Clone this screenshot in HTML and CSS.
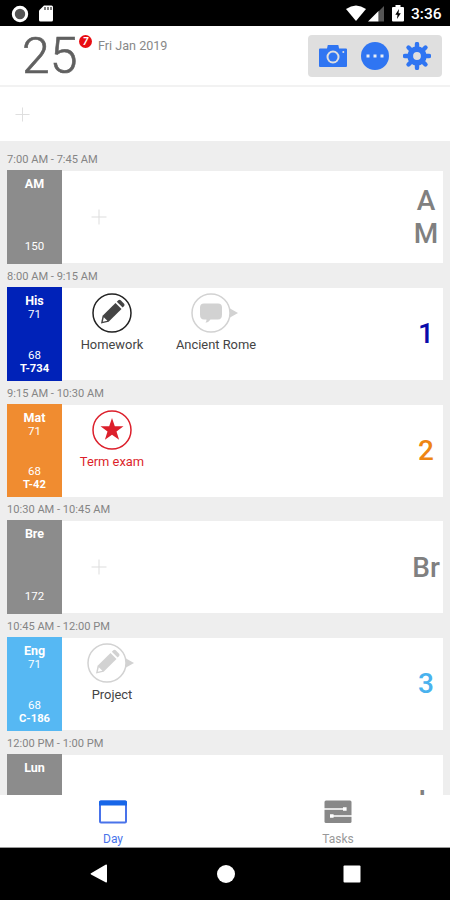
FILE: index.html
```html
<!doctype html>
<html lang="en">
    <head>
        <meta charset="UTF-8" />
        <meta name="viewport" content="width=device-width, initial-scale=1.0" />
        <title>Day schedule</title>
        <link rel="stylesheet" href="styles.css">
    </head>
    <body>
        <svg class="defs">
            <symbol id="pencil" viewBox="0 0 40 40">
                <path fill="currentColor" d="M9.500 30.500l1.600-7.700L24 9.900l6 6-12.900 12.900z" />
                <path fill="currentColor" d="M25.300 8.700l1.500-1.400q1.200-1 2.400 0l3.400 3.400q1.100 1.200 0 2.400L31.200 14.600z" />
                <path fill="#fff" d="M11.300 28.700l1-4.400 3.600 3.400z" />
            </symbol>
            <symbol id="plus" viewBox="0 0 16 16">
                <path stroke="currentColor" d="M8 .5v15M.5 8h15" />
            </symbol>
        </svg>

        <div class="status-bar">
            <svg width="18" height="18" viewBox="0 0 18 18">
                <circle cx="9" cy="9" r="6.700" fill="#555" stroke="#fff" stroke-width="3" />
            </svg>
            <svg class="sd-card" width="14" height="17" viewBox="0 0 14 17">
                <path fill="#fff" d="M5 .5h7.500q1.500 0 1.500 1.500v13q0 1.500-1.500 1.500h-11Q0 16.500 0 15V5.500z" />
                <path stroke="#555" stroke-width="1.500" d="M6 2v3M9 2v3M12 2v3" />
            </svg>
            <div class="status-right">
                <svg width="20" height="17" viewBox="0 0 20 17">
                    <path fill="#fff" d="M0 4Q10-3 20 4L10 16z" />
                </svg>
                <svg class="signal" width="16" height="16" viewBox="0 0 16 16">
                    <path fill="#555" d="M10.500 5.500L16 0v15.500h-5.500z" />
                    <path fill="#fff" d="M0 15.500L10.500 5v10.500z" />
                </svg>
                <svg class="battery" width="12" height="17" viewBox="0 0 12 17">
                    <path fill="#fff" d="M3.500 0h5v2H11q1 0 1 1v12.500q0 1-1 1H1q-1 0-1-1V3q0-1 1-1h2.500z" />
                    <path fill="#000" d="M7 4L3.300 9.800h2.200L5 14l3.800-5.800H6.500z" />
                </svg>
                <span class="clock">3:36</span>
            </div>
        </div>

        <div class="header">
            <div class="date">25</div>
            <div class="badge">7</div>
            <div class="month">Fri Jan 2019</div>
            <div class="toolbar">
                <svg width="28" height="24" viewBox="0 0 28 24">
                    <path fill="#2f75f2" fill-rule="evenodd" d="M8 4.500L8.800 1h10.500l.8 3.500H27q1 0 1 1V22q0 1-1 1H1q-1 0-1-1V5.500q0-1 1-1zM14 6.500a6.500 6.500 0 1 0 0 13a6.500 6.500 0 1 0 0-13z" />
                    <circle cx="14" cy="13" r="4.500" fill="#2f75f2" />
                    <circle cx="24.300" cy="8" r="1" fill="#dfdfdf" />
                </svg>
                <svg width="28" height="28" viewBox="0 0 28 28">
                    <circle cx="14" cy="14" r="14" fill="#2f75f2" />
                    <path fill="#e8edf5" d="M5.500 12.500h3v3h-3zM12.500 12.500h3v3h-3zM19.500 12.500h3v3h-3z" />
                </svg>
                <svg width="28" height="28" viewBox="0 0 28 28">
                    <circle cx="14" cy="14" r="6.800" fill="none" stroke="#2f75f2" stroke-width="5.800" />
                    <g stroke="#2f75f2" stroke-width="4.400" stroke-linecap="round">
                        <path d="M14 2v3M14 23v3M2 14h3M23 14h3" />
                        <path d="M5.500 5.500l2 2M20.500 20.500l2 2M22.500 5.500l-2 2M7.500 20.500l-2 2" />
                    </g>
                </svg>
            </div>
        </div>

        <div class="all-day">
            <svg class="plus" width="15" height="15"><use href="#plus" /></svg>
        </div>

        <div class="schedule">
            <div class="period gray">
                <div class="time">7:00 AM - 7:45 AM</div>
                <div class="row">
                    <div class="subject"><b>AM</b><span class="bottom">150</span></div>
                    <div class="card">
                        <svg class="plus" width="16" height="16"><use href="#plus" /></svg>
                        <div class="number">A<br>M</div>
                    </div>
                </div>
            </div>

            <div class="period blue">
                <div class="time">8:00 AM - 9:15 AM</div>
                <div class="row">
                    <div class="subject"><b>His</b><span>71</span><span class="bottom">68</span><strong>T-734</strong></div>
                    <div class="card">
                        <div class="task">
                            <svg width="50" height="40" viewBox="0 0 50 40">
                                <circle cx="25" cy="20" r="19" fill="none" stroke="#222" stroke-width="1.500" />
                                <use href="#pencil" x="4.500" width="40" height="40" />
                            </svg>
                            <span>Homework</span>
                        </div>
                        <div class="task wide">
                            <svg class="faded" width="50" height="40" viewBox="0 0 50 40">
                                <circle cx="20" cy="20" r="19" fill="none" stroke="currentColor" stroke-width="1.500" />
                                <path fill="currentColor" d="M39 15.500l8 4.500-8 4.500zM13 10.500h14q4 0 4 4v7q0 5-4 5h-7.500q-1.500 2.500-5 3.200q1.200-1.700 1-3.200H13q-4 0-4-5v-7q0-4 4-4z" />
                            </svg>
                            <span>Ancient Rome</span>
                        </div>
                        <div class="number">1</div>
                    </div>
                </div>
            </div>

            <div class="period orange">
                <div class="time">9:15 AM - 10:30 AM</div>
                <div class="row">
                    <div class="subject"><b>Mat</b><span>71</span><span class="bottom">68</span><strong>T-42</strong></div>
                    <div class="card">
                        <div class="task exam">
                            <svg width="50" height="40" viewBox="0 0 50 40">
                                <circle cx="25" cy="20" r="19" fill="none" stroke="currentColor" stroke-width="1.500" />
                                <path fill="currentColor" d="M25 8l2.800 8.300H36.500l-7 5.200 2.600 8.300-7.100-5-7.100 5 2.600-8.300-7-5.200h8.700z" />
                            </svg>
                            <span>Term exam</span>
                        </div>
                        <div class="number">2</div>
                    </div>
                </div>
            </div>

            <div class="period gray">
                <div class="time">10:30 AM - 10:45 AM</div>
                <div class="row">
                    <div class="subject"><b>Bre</b><span class="bottom">172</span></div>
                    <div class="card">
                        <svg class="plus" width="16" height="16"><use href="#plus" /></svg>
                        <div class="number">Br</div>
                    </div>
                </div>
            </div>

            <div class="period sky">
                <div class="time">10:45 AM - 12:00 PM</div>
                <div class="row">
                    <div class="subject"><b>Eng</b><span>71</span><span class="bottom">68</span><strong>C-186</strong></div>
                    <div class="card">
                        <div class="task">
                            <svg class="faded" width="50" height="40" viewBox="0 0 50 40">
                                <circle cx="20" cy="20" r="19" fill="none" stroke="currentColor" stroke-width="1.500" />
                                <path fill="currentColor" d="M39 15.500l8 4.500-8 4.500z" />
                                <use href="#pencil" x="-.5" width="40" height="40" />
                            </svg>
                            <span>Project</span>
                        </div>
                        <div class="number">3</div>
                    </div>
                </div>
            </div>

            <div class="period gray">
                <div class="time">12:00 PM - 1:00 PM</div>
                <div class="row">
                    <div class="subject"><b>Lun</b></div>
                    <div class="card">
                        <div class="number">L</div>
                    </div>
                </div>
            </div>
        </div>

        <div class="tabs">
            <div class="tab active">
                <svg width="28" height="24" viewBox="0 0 28 24">
                    <rect x="1" y="1.500" width="26" height="21" rx="1" fill="none" stroke="currentColor" stroke-width="2" />
                    <path fill="#1766e8" d="M1.500.5h25q1.500 0 1.500 1.500v3.500H0V2Q0 .5 1.500.5z" />
                </svg>
                <span>Day</span>
            </div>
            <div class="tab">
                <svg width="28" height="24" viewBox="0 0 28 24">
                    <rect x=".5" y=".5" width="27" height="22.500" rx="1.500" fill="#888" />
                    <path stroke="#fff" stroke-width="1.300" d="M0 9h20M8 16h20" />
                    <path fill="#fff" d="M19 7.200h3.600v3.600H19zM6 14.200h3.600v3.600H6z" />
                </svg>
                <span>Tasks</span>
            </div>
        </div>

        <div class="nav-bar">
            <svg width="18" height="20" viewBox="0 0 18 20"><path fill="#fff" d="M1 9.200L15.500.8Q17 0 17 1.500v16q0 1.500-1.500.7L1 10.500Q0 9.800 1 9.200z" /></svg>
            <svg width="18" height="18" viewBox="0 0 18 18"><circle cx="9" cy="9" r="9" fill="#fff" /></svg>
            <svg width="18" height="18" viewBox="0 0 18 18"><rect x=".5" y=".5" width="17" height="17" rx="1" fill="#fff" /></svg>
        </div>
    </body>
</html>
```
FILE: styles.css
```css
* {
    box-sizing: border-box;
}

body {
    margin: 0;
    width: 450px;
    height: 900px;
    display: flex;
    flex-direction: column;
    overflow: hidden;
    font-family: Roboto, sans-serif;
    background: #fff;
}

svg {
    display: block;
    flex: none;
}

.defs {
    width: 0;
    height: 0;
    position: absolute;
}

.status-bar {
    height: 26px;
    flex: none;
    background: #000;
    display: flex;
    align-items: center;
    padding: 1px 8px 0 11px;
}

.sd-card {
    margin-left: 10px;
}

.status-right {
    margin-left: auto;
    display: flex;
    align-items: center;
    color: #fff;
}

.signal {
    margin-left: 2px;
}

.battery {
    margin-left: 8px;
}

.clock {
    width: 31px;
    margin-left: 7px;
    padding-top: 1px;
    font-size: 15.5px;
    font-weight: 500;
    line-height: 17px;
    white-space: nowrap;
}

.header {
    height: 61px;
    flex: none;
    display: flex;
    align-items: flex-start;
    padding: 9px 8px 0 22px;
    border-bottom: 2px solid #f2f2f2;
}

.date {
    width: 57px;
    font-size: 50px;
    line-height: 43px;
    color: #606060;
    font-weight: 300;
    -webkit-text-stroke: 0.6px #606060;
}

.badge {
    width: 13px;
    height: 13px;
    border-radius: 50%;
    background: #e80c12;
    color: #fff;
    font-size: 10px;
    font-style: italic;
    font-weight: 700;
    line-height: 13px;
    text-align: center;
}

.month {
    margin: 3px 0 0 6px;
    font-size: 12.6px;
    line-height: 16px;
    color: #888;
}

.toolbar {
    width: 134px;
    height: 42px;
    margin-left: auto;
    border-radius: 4px;
    background: #dfdfdf;
    display: flex;
    align-items: center;
    justify-content: space-between;
    padding: 0 11px;
}

.all-day {
    height: 54px;
    flex: none;
    display: flex;
    align-items: center;
    padding-left: 15px;
}

.plus {
    color: #ddd;
}

.schedule {
    flex: 1;
    min-height: 0;
    overflow: hidden;
    background: #eee;
    padding: 6.4px 7px 0;
}

.period {
    height: 116.7px;
    display: flex;
    flex-direction: column;
}

.time {
    height: 23px;
    flex: none;
    padding-top: 5px;
    font-size: 11.1px;
    line-height: 16px;
    color: #858585;
}

.row {
    flex: 1;
    display: flex;
    align-items: center;
}

.subject {
    width: 55px;
    height: 100%;
    display: flex;
    flex-direction: column;
    align-items: center;
    padding: 7px 0 6px;
    color: #fff;
    font-size: 11.5px;
    line-height: 13px;
}

.subject b {
    font-size: 12.5px;
    line-height: 14px;
}

.subject .bottom {
    margin-top: auto;
}

.subject .bottom:last-child {
    margin-bottom: 5px;
}

.subject strong {
    font-size: 11.2px;
}

.card {
    flex: 1;
    height: 92px;
    background: #fff;
    display: flex;
    align-items: center;
}

.card .plus {
    margin-left: 29px;
}

.task {
    width: 100px;
    align-self: flex-start;
    display: flex;
    flex-direction: column;
    align-items: center;
    padding-top: 5px;
    font-size: 12.9px;
    line-height: 16px;
    color: #444;
    white-space: nowrap;
}

.task span {
    margin-top: 4px;
}

.wide {
    width: 108px;
}

.faded {
    color: #d2d2d2;
}

.exam {
    color: #dc1f2b;
}

.number {
    width: 34px;
    margin-left: auto;
    text-align: center;
    font-size: 28px;
    font-weight: 500;
    line-height: 33px;
}

.gray .subject {
    background: #8c8c8c;
}

.gray .number {
    color: #808080;
}

.blue .subject {
    background: #0022b8;
}

.blue .number {
    color: #0a0aaa;
}

.orange .subject {
    background: #f08c30;
}

.orange .number {
    color: #ee8512;
}

.sky .subject {
    background: #56b8f3;
}

.sky .number {
    color: #4ab2ee;
}

.tabs {
    height: 53px;
    flex: none;
    display: flex;
    background: #fff;
    border-bottom: 1px solid #999;
}

.tab {
    flex: 1;
    display: flex;
    flex-direction: column;
    align-items: center;
    padding: 5px 0 0 1px;
    font-size: 12px;
    line-height: 14px;
    color: #999;
}

.tab span {
    margin-top: 8px;
}

.active {
    color: #4973ea;
}

.nav-bar {
    height: 52px;
    flex: none;
    display: flex;
    align-items: center;
    justify-content: space-between;
    padding: 0 89px 0 90px;
    background: #000;
}
```
